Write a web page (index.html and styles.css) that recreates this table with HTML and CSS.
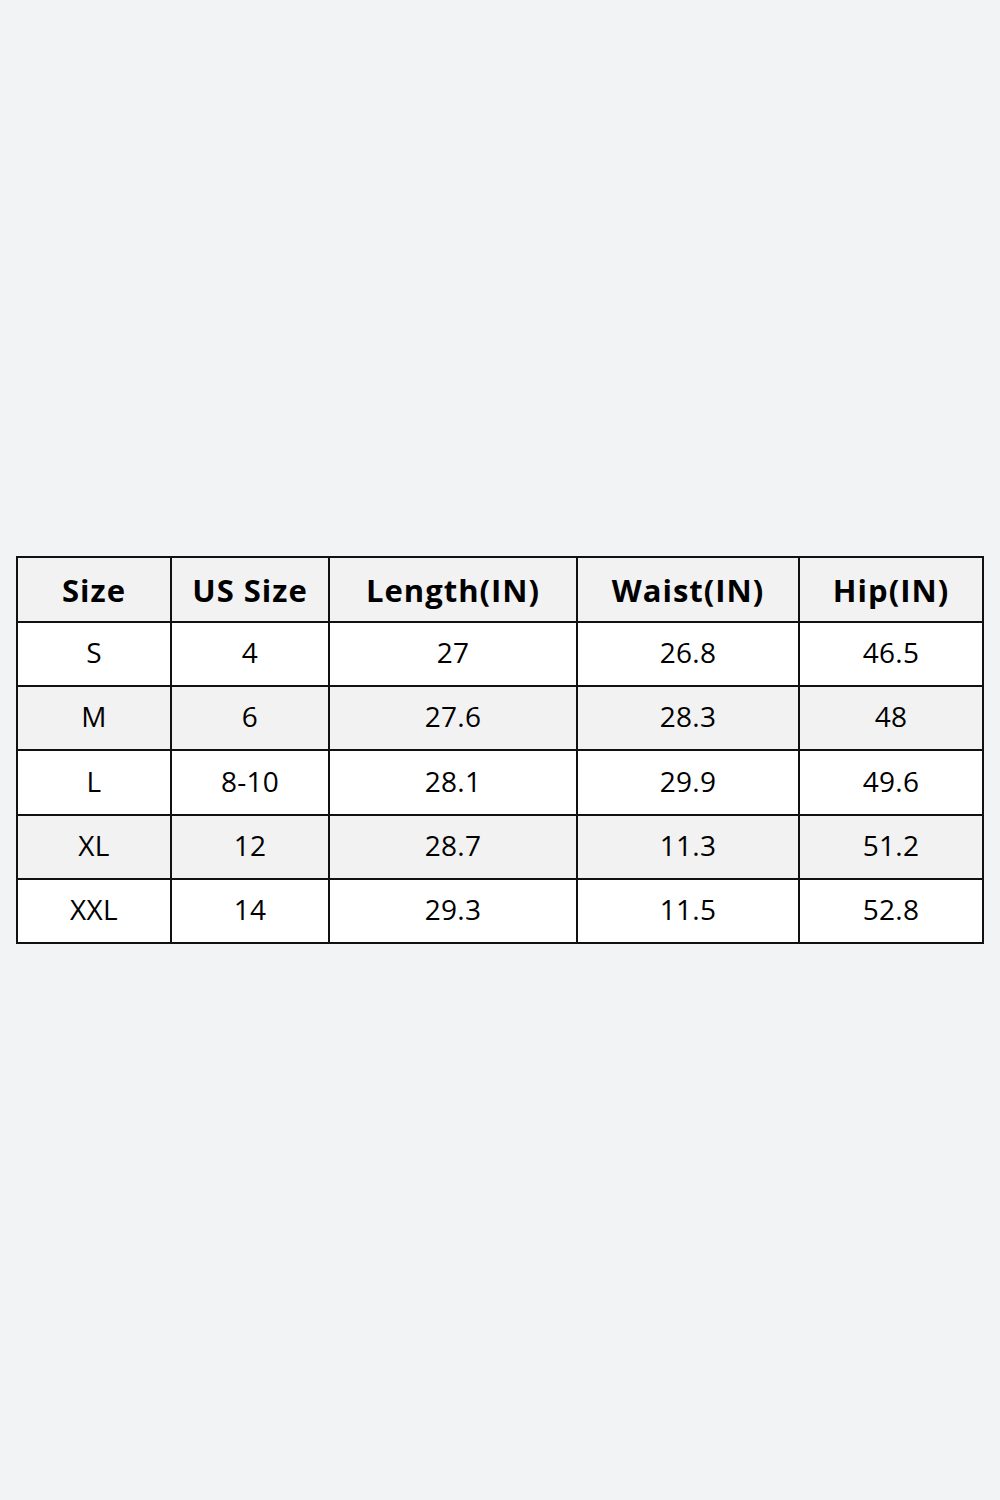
FILE: index.html
```html
<!DOCTYPE html>
<html>
<head>
<meta charset="utf-8">
<link rel="stylesheet" href="styles.css">
</head>
<body>
<main class="page">
  <div class="chart">
    <div class="cell head">Size</div>
    <div class="cell head">US Size</div>
    <div class="cell head">Length(IN)</div>
    <div class="cell head">Waist(IN)</div>
    <div class="cell head">Hip(IN)</div>

    <div class="cell">S</div>
    <div class="cell">4</div>
    <div class="cell">27</div>
    <div class="cell">26.8</div>
    <div class="cell">46.5</div>

    <div class="cell alt">M</div>
    <div class="cell alt">6</div>
    <div class="cell alt">27.6</div>
    <div class="cell alt">28.3</div>
    <div class="cell alt">48</div>

    <div class="cell">L</div>
    <div class="cell">8-10</div>
    <div class="cell">28.1</div>
    <div class="cell">29.9</div>
    <div class="cell">49.6</div>

    <div class="cell alt">XL</div>
    <div class="cell alt">12</div>
    <div class="cell alt">28.7</div>
    <div class="cell alt">11.3</div>
    <div class="cell alt">51.2</div>

    <div class="cell">XXL</div>
    <div class="cell">14</div>
    <div class="cell">29.3</div>
    <div class="cell">11.5</div>
    <div class="cell">52.8</div>
  </div>
</main>
</body>
</html>
```

FILE: styles.css
```css
html, body {
  margin: 0;
  padding: 0;
  background: #f2f3f5;
}

.page {
  height: 1500px;
  display: flex;
  align-items: center;
  justify-content: center;
}

.chart {
  display: grid;
  grid-template-columns: 152px 156px 246px 220px 182px;
  grid-template-rows: 63px 62px 62px 63px 62px 62px;
  gap: 2px;
  padding: 2px;
  background: #111111;
  font-family: "Open Sans", "Noto Sans", sans-serif;
  color: #000;
}

.cell {
  background: #ffffff;
  display: flex;
  align-items: center;
  justify-content: center;
  font-size: 28px;
  letter-spacing: 0.3px;
  padding-bottom: 4px;
}

.cell.alt,
.cell.head {
  background: #f2f2f2;
}

.cell.head {
  font-weight: 700;
  font-size: 31px;
  letter-spacing: 1px;
  padding-bottom: 0;
}
```
